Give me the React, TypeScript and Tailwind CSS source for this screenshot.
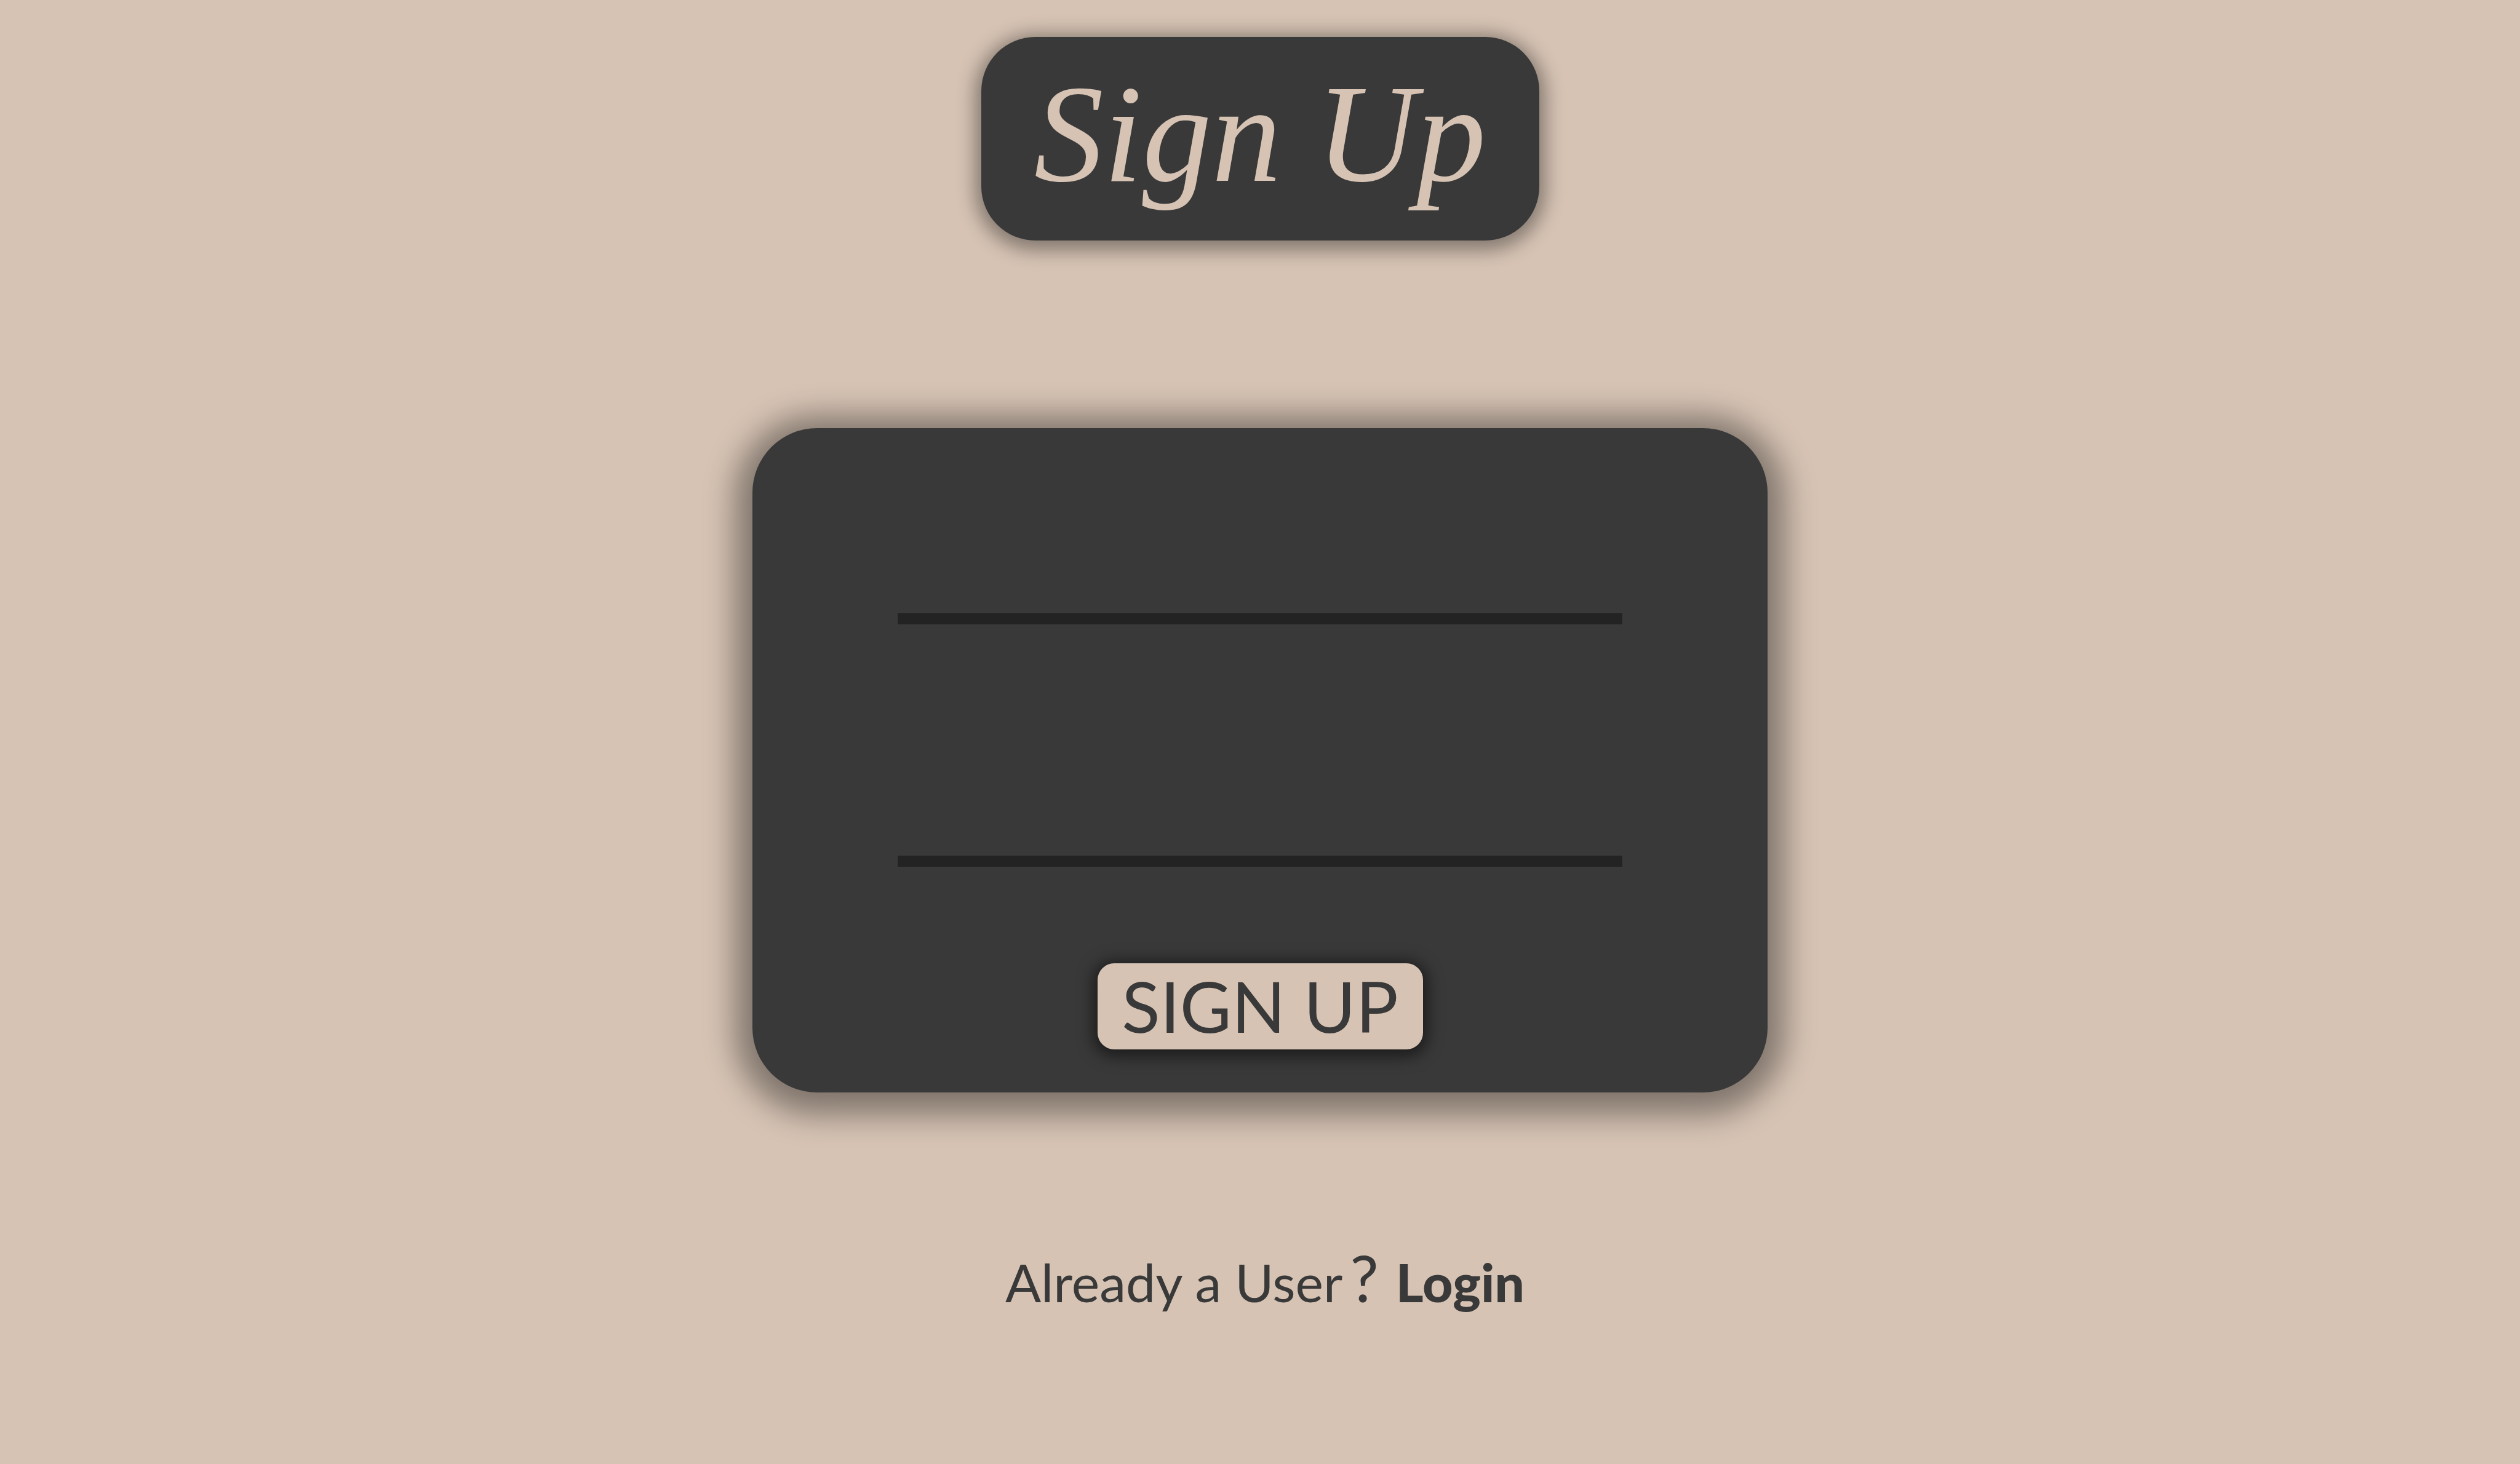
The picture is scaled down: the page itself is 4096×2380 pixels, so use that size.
import React from "react";

function TitleBadge() {
  return (
    <header className="flex h-[331px] w-full max-w-[907px] items-center justify-center rounded-[88px] bg-[#393939] pb-4 shadow-[0_6px_30px_10px_rgba(0,0,0,0.38)]">
      <h1 className="whitespace-nowrap font-['Liberation_Serif',serif] text-[226px] leading-none italic text-[#d6c3b4]">
        Sign Up
      </h1>
    </header>
  );
}

function Field({ label, type, name }: { label: string; type: string; name: string }) {
  return (
    <input
      aria-label={label}
      type={type}
      name={name}
      className="h-[150px] w-full border-b-[18px] border-[#232323] bg-transparent font-['Lato',sans-serif] text-[86px] text-[#d6c3b4] outline-none"
    />
  );
}

function SignUpForm() {
  return (
    <form
      onSubmit={(event) => event.preventDefault()}
      className="mt-[305px] flex w-full max-w-[1650px] flex-col items-center rounded-[105px] bg-[#393939] px-[236px] pt-[169px] pb-[70px] shadow-[0_8px_50px_28px_rgba(0,0,0,0.4)]"
    >
      <div className="flex w-full flex-col gap-[244px]">
        <Field label="Username" type="text" name="username" />
        <Field label="Password" type="password" name="password" />
      </div>
      <button
        type="submit"
        className="mt-[157px] flex h-[140px] w-[529px] items-center justify-center whitespace-nowrap rounded-[27px] bg-[#d6c3b4] pb-1 font-['Lato',sans-serif] text-[115px] leading-none text-[#393939] shadow-[0_4px_24px_8px_rgba(0,0,0,0.5)]"
      >
        SIGN UP
      </button>
    </form>
  );
}

export default function App() {
  return (
    <main className="flex min-h-screen flex-col items-center bg-[#d6c3b4] pt-[60px]">
      <TitleBadge />
      <SignUpForm />
      <p className="mt-[246px] flex items-baseline whitespace-nowrap pl-4 font-['Lato',sans-serif] text-[86px] leading-[110px] text-[#393939]">
        <span>Already a User</span>
        <span className="ml-3 text-[104px]">?</span>
        <a href="#login" className="ml-7 font-black">
          Login
        </a>
      </p>
    </main>
  );
}
